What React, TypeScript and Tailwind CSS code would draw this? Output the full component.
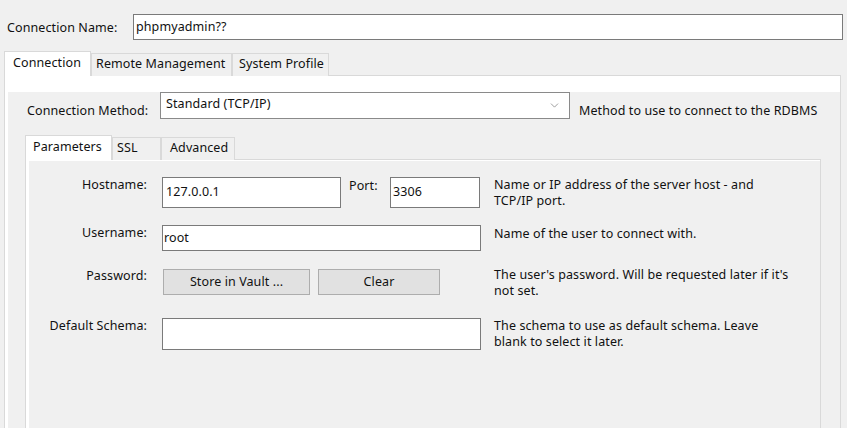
import { ChevronDown } from "lucide-react";

const Tab = ({ label, active, w, pl }: { label: string; active?: boolean; w: string; pl: string }) => {
    return (
        <div
            className={
                active
                    ? `relative z-10 h-[25px] ${w} ${pl} pt-[3px] border border-b-0 border-[#d9d9d9] bg-white whitespace-nowrap leading-[16px]`
                    : `h-[23px] ${w} ${pl} pt-[2px] border border-b-0 border-[#d9d9d9] bg-[#f0f0f0] whitespace-nowrap leading-[16px]`
            }
        >
            {label}
        </div>
    );
};

const Desc = ({ children, className = "" }: { children: React.ReactNode; className?: string }) => (
    <div className={`leading-[16px] whitespace-nowrap ${className}`}>{children}</div>
);

const Label = ({ children, className = "" }: { children: React.ReactNode; className?: string }) => (
    <div className={`w-[118px] shrink-0 text-right leading-[16px] whitespace-nowrap ${className}`}>{children}</div>
);

export default function App() {
    return (
        <div className="w-[847px] h-[428px] overflow-hidden bg-[#f0f0f0] text-[12.5px] tracking-[0.1px] text-[#111] font-['Noto_Sans',sans-serif]">
            {/* connection name */}
            <div className="flex items-center h-[26px] mt-[14px]">
                <div className="w-[133px] pl-[7px] pt-[2px] whitespace-nowrap">Connection Name:</div>
                <div className="w-[710px] h-[26px] flex items-center pl-[2px] bg-white border border-[#7a7a7a]">
                    phpmyadmin??
                </div>
            </div>

            {/* outer tabs */}
            <div className="flex items-end h-[25px] mt-[11px] ml-[4px]">
                <Tab label="Connection" active w="w-[87px]" pl="pl-[8px]" />
                <Tab label="Remote Management" w="w-[141px]" pl="pl-[4px]" />
                <Tab label="System Profile" w="w-[97px]" pl="pl-[6px]" />
            </div>

            <div className="w-[837px] h-[360px] ml-[4px] -mt-px border border-[#d9d9d9] bg-white">
                <div className="h-full ml-[3px] mt-px bg-[#f0f0f0]">
                    {/* connection method */}
                    <div className="flex items-end h-[27px] mt-[16px]">
                        <div className="w-[152px] pl-[19px] leading-[16px] whitespace-nowrap">Connection Method:</div>
                        <div className="w-[410px] h-[27px] flex items-center justify-between pl-[5px] pr-[8px] bg-white border border-[#8a8a8a]">
                            <span className="-mt-[2px]">Standard (TCP/IP)</span>
                            <ChevronDown className="w-[13px] h-[13px] text-[#707070]" strokeWidth={1.25} />
                        </div>
                        <Desc className="ml-[9px]">Method to use to connect to the RDBMS</Desc>
                    </div>

                    {/* inner tabs */}
                    <div className="flex items-end h-[25px] mt-[16px] ml-[17px]">
                        <Tab label="Parameters" active w="w-[87px]" pl="pl-[7px]" />
                        <Tab label="SSL" w="w-[49px]" pl="pl-[4px]" />
                        <Tab label="Advanced" w="w-[74px]" pl="pl-[8px]" />
                    </div>

                    <div className="w-[796px] h-[280px] ml-[17px] -mt-px border border-[#d9d9d9] bg-white">
                        <div className="h-full ml-[3px] mt-px bg-[#f0f0f0] pt-[16px]">
                            {/* hostname */}
                            <div className="flex items-start">
                                <Label>Hostname:</Label>
                                <div className="ml-[15px] w-[179px] h-[31px] flex items-center pl-[3px] bg-white border border-[#7a7a7a]">
                                    127.0.0.1
                                </div>
                                <div className="ml-[8px] w-[41px] leading-[16px] pt-[1px]">Port:</div>
                                <div className="w-[90px] h-[31px] flex items-center pl-[2px] bg-white border border-[#7a7a7a]">
                                    3306
                                </div>
                                <Desc className="ml-[14px]">
                                    Name or IP address of the server host - and
                                    <br />
                                    TCP/IP port.
                                </Desc>
                            </div>

                            {/* username */}
                            <div className="flex items-start mt-[16px]">
                                <Label>Username:</Label>
                                <div className="ml-[15px] w-[319px] h-[26px] flex items-center pl-[1px] bg-white border border-[#7a7a7a]">
                                    root
                                </div>
                                <Desc className="ml-[13px] pt-[1px]">Name of the user to connect with.</Desc>
                            </div>

                            {/* password */}
                            <div className="flex items-start mt-[18px]">
                                <Label className="-mt-[1px]">Password:</Label>
                                <button className="ml-[16px] w-[147px] h-[26px] bg-[#e1e1e1] border border-[#adadad]">
                                    Store in Vault ...
                                </button>
                                <button className="ml-[8px] w-[122px] h-[26px] bg-[#e1e1e1] border border-[#adadad]">
                                    Clear
                                </button>
                                <Desc className="ml-[54px] -mt-[2px]">
                                    The user's password. Will be requested later if it's
                                    <br />
                                    not set.
                                </Desc>
                            </div>

                            {/* default schema */}
                            <div className="flex items-start mt-[19px]">
                                <Label>Default Schema:</Label>
                                <div className="ml-[15px] w-[319px] h-[32px] bg-white border border-[#7a7a7a]" />
                                <Desc className="ml-[13px]">
                                    The schema to use as default schema. Leave
                                    <br />
                                    blank to select it later.
                                </Desc>
                            </div>
                        </div>
                    </div>
                </div>
            </div>
        </div>
    );
}
